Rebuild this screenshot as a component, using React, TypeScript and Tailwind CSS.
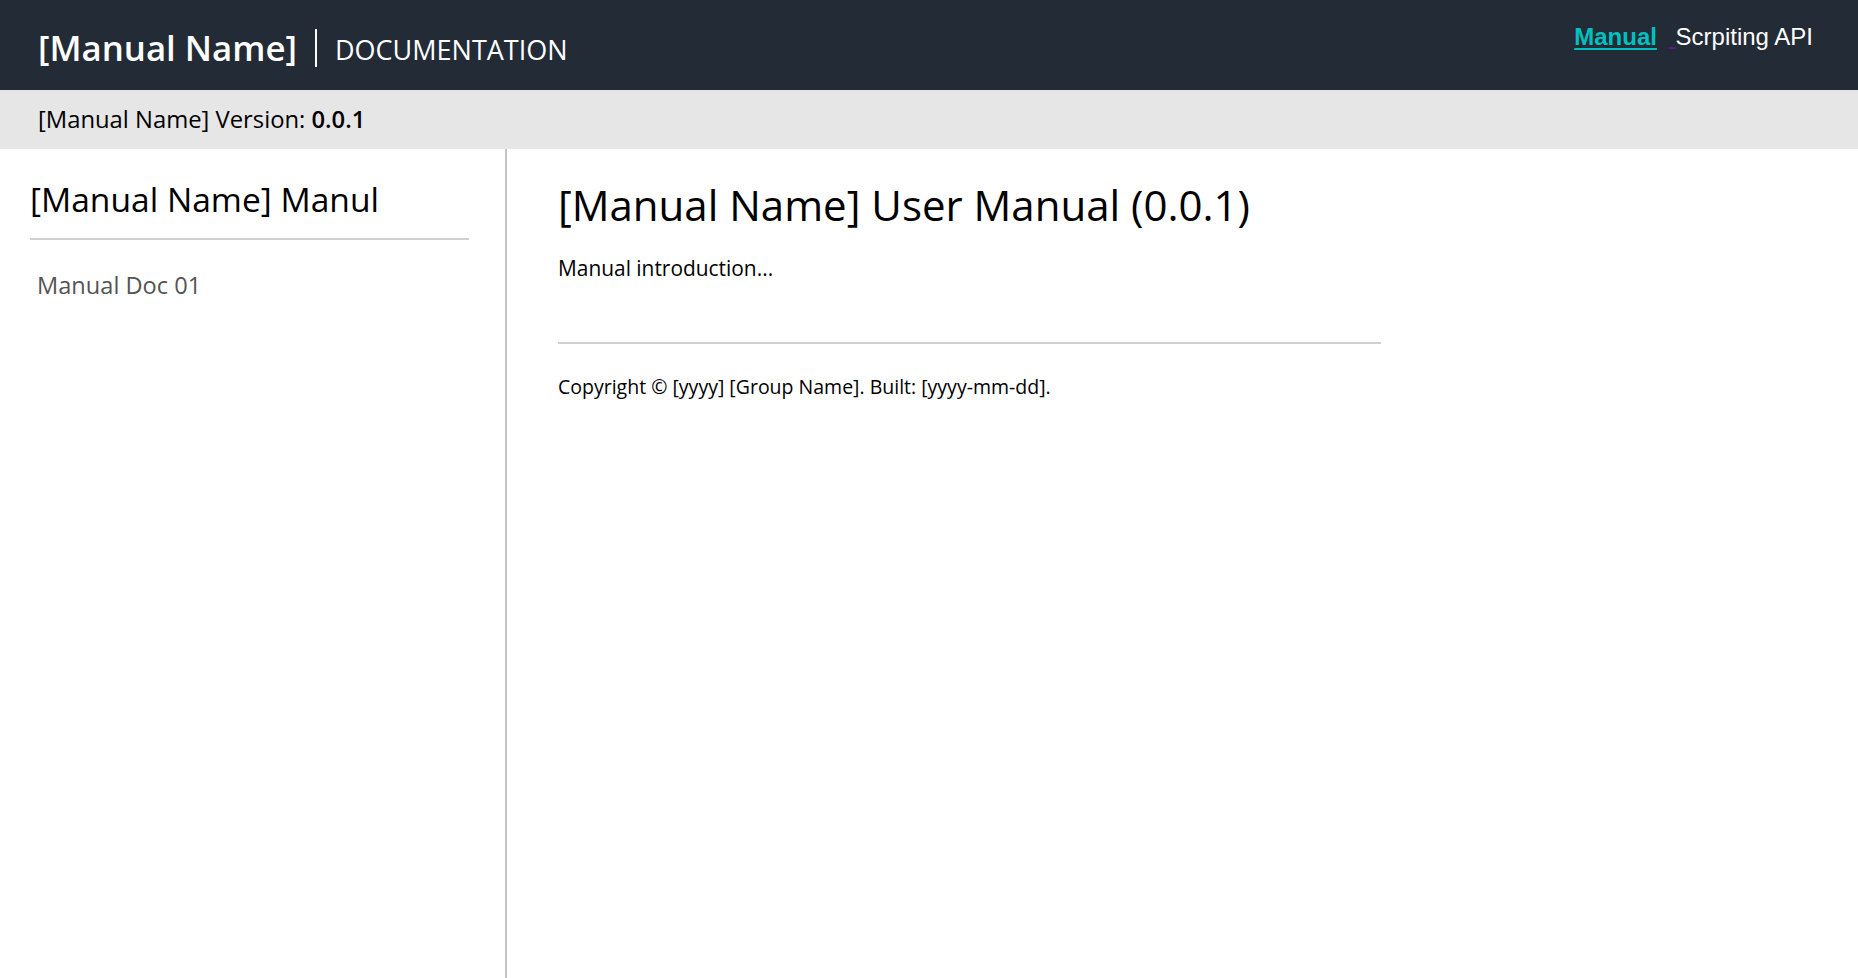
export default function App() {
  return (
    <div className="flex min-h-screen flex-col bg-white font-['Open_Sans',sans-serif] text-black">
      <header className="flex h-[90px] shrink-0 items-start justify-between bg-[#222b36] pl-[38px] pr-[45px]">
        <div className="flex items-center pt-[26px]">
          <span className="text-[34.8px] font-semibold leading-[44px] text-white">[Manual Name]</span>
          <span className="mx-[18px] h-[38px] w-[2px] bg-white" />
          <span className="pt-[4px] text-[27px] leading-[36px] text-white">DOCUMENTATION</span>
        </div>
        <nav className="flex items-baseline pt-[23px] font-['Liberation_Sans',Arial,sans-serif] text-[24px] leading-[28px]">
          <a href="#" className="font-bold text-[#00c0c0] underline decoration-[2px] underline-offset-[3px]">
            Manual
          </a>
          <span className="ml-[12px] text-[#551a8b] underline">&nbsp;</span>
          <a href="#" className="text-white">
            Scrpiting API
          </a>
        </nav>
      </header>

      <div className="flex h-[59px] shrink-0 items-center bg-[#e6e6e6] pl-[38px] text-[23.8px] text-black">
        <span>[Manual Name] Version:&nbsp;</span>
        <span className="font-semibold">0.0.1</span>
      </div>

      <div className="flex flex-1">
        <aside className="w-[507px] shrink-0 border-r-2 border-[#c4c4c4] pl-[30px] pr-[36px] pt-[27px]">
          <h2 className="text-[33.6px] font-medium leading-[46px]">[Manual Name] Manul</h2>
          <hr className="mt-[16px] border-t-2 border-[#d0d0d0]" />
          <ul className="mt-[28px] pl-[7px]">
            <li className="text-[23.6px] leading-[34px] text-[#555555]">Manual Doc 01</li>
          </ul>
        </aside>

        <main className="flex-1 pl-[51px] pt-[28px]">
          <div className="w-[823px]">
            <h1 className="text-[42px] font-medium leading-[56px]">[Manual Name] User Manual (0.0.1)</h1>
            <p className="mt-[20px] text-[20.9px] leading-[30px]">Manual introduction...</p>
            <hr className="mt-[59px] border-t-2 border-[#d0d0d0]" />
            <p className="mt-[28px] text-[19.5px] leading-[30px]">Copyright © [yyyy] [Group Name]. Built: [yyyy-mm-dd].</p>
          </div>
        </main>
      </div>
    </div>
  );
}
